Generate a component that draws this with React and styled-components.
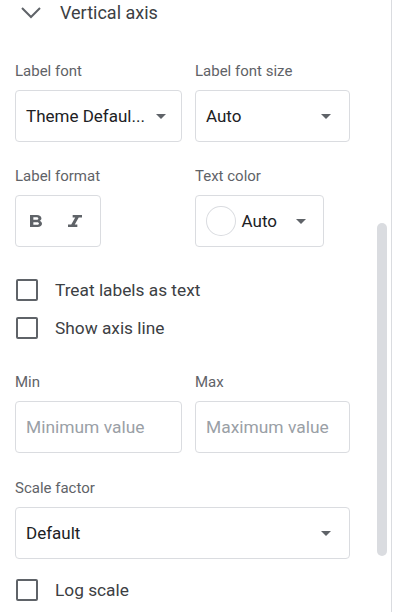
import React from 'react';
import styled, { createGlobalStyle } from 'styled-components';

const GlobalStyle = createGlobalStyle`
    html, body {
        margin: 0;
        padding: 0;
        background: #fff;
    }
    body {
        font-family: Roboto, 'Liberation Sans', Arial, sans-serif;
    }
`;

const Panel = styled.div`
    position: relative;
    width: 391px;
    height: 612px;
    border-right: 1px solid #dadce0;
    overflow: hidden;
`;

const Header = styled.div`
    display: flex;
    align-items: center;
    gap: 19px;
    height: 26px;
    padding-left: 21px;
    color: #3c4043;
    font-size: 18px;
    line-height: 26px;
`;

const Body = styled.div`
    width: 335px;
    padding: 35px 15px 0 15px;
`;

const Columns = styled.div`
    display: grid;
    grid-template-columns: 167px 155px;
    column-gap: 13px;
    margin-top: ${props => props.top || 0}px;
`;

const Field = styled.div`
    display: flex;
    flex-direction: column;
    align-items: flex-start;
    margin-top: ${props => props.top || 0}px;
`;

const Label = styled.div`
    color: #5f6368;
    font-size: 15px;
    line-height: 20px;
    margin-bottom: 9px;
`;

const Box = styled.div`
    box-sizing: border-box;
    display: flex;
    align-items: center;
    height: 52px;
    width: ${props => (props.w ? `${props.w}px` : '100%')};
    border: 1px solid #dadce0;
    border-radius: 4px;
    background: #fff;
`;

const Select = styled(Box)`
    justify-content: space-between;
    padding: 0 ${props => props.pr || 17}px 0 10px;
`;

const Value = styled.span`
    color: #202124;
    font-size: 17px;
    white-space: nowrap;
`;

const Placeholder = styled.span`
    color: #9aa0a6;
    font-size: 17.4px;
    padding-left: 10px;
    white-space: nowrap;
`;

const Arrow = styled.span`
    width: 0;
    height: 0;
    border-left: 5px solid transparent;
    border-right: 5px solid transparent;
    border-top: 5px solid #5f6368;
`;

const FormatBox = styled(Box)`
    padding-left: 14px;
    gap: 26px;
`;

const ColorBox = styled(Box)`
    padding: 0 17px 0 10px;
`;

const Swatch = styled.span`
    box-sizing: border-box;
    width: 30px;
    height: 30px;
    border-radius: 50%;
    border: 1px solid #dadce0;
    margin-right: 6px;
`;

const ColorValue = styled(Value)`
    margin-right: 19px;
`;

const CheckRow = styled.label`
    display: flex;
    align-items: center;
    gap: 17px;
    height: 36px;
    padding-left: 1px;
    margin-top: ${props => props.top || 0}px;
    color: #3c4043;
    font-size: 17.3px;
`;

const Check = styled.span`
    box-sizing: border-box;
    width: 22px;
    height: 22px;
    border: 2px solid #5f6368;
    border-radius: 2px;
`;

const Thumb = styled.div`
    position: absolute;
    left: 377px;
    top: 223px;
    width: 10px;
    height: 333px;
    border-radius: 5px;
    background: #dadce0;
`;

const Chevron = () => (
    <svg width="20" height="12" viewBox="0 0 20 12">
        <polyline points="1,1 10,10 19,1" fill="none" stroke="#5f6368" strokeWidth="2" />
    </svg>
);

const BoldIcon = () => (
    <svg width="12" height="12" viewBox="7 4 10.75 14" preserveAspectRatio="none">
        <path
            fill="#5f6368"
            d="M15.6 10.79c.97-.67 1.65-1.77 1.65-2.79 0-2.26-1.75-4-4-4H7v14h7.04c2.09 0 3.71-1.7 3.71-3.79 0-1.52-.86-2.82-2.15-3.42zM10 6.5h3c.83 0 1.5.67 1.5 1.5s-.67 1.5-1.5 1.5h-3v-3zm3.5 9H10v-3h3.5c.83 0 1.5.67 1.5 1.5s-.67 1.5-1.5 1.5z"
        />
    </svg>
);

const ItalicIcon = () => (
    <svg width="14" height="12" viewBox="6 4 12 14" preserveAspectRatio="none">
        <path fill="#5f6368" d="M10 4v3h2.21l-3.42 8H6v3h8v-3h-2.21l3.42-8H18V4z" />
    </svg>
);

const Checkbox = ({ text, top }) => (
    <CheckRow top={top}>
        <Check />
        {text}
    </CheckRow>
);

export default function App() {
    return (
        <>
            <GlobalStyle />
            <Panel>
                <Header>
                    <Chevron />
                    Vertical axis
                </Header>
                <Body>
                    <Columns>
                        <Field>
                            <Label>Label font</Label>
                            <Select pr={15}>
                                <Value>Theme Defaul...</Value>
                                <Arrow />
                            </Select>
                        </Field>
                        <Field>
                            <Label>Label font size</Label>
                            <Select pr={18}>
                                <Value>Auto</Value>
                                <Arrow />
                            </Select>
                        </Field>
                    </Columns>
                    <Columns top={24}>
                        <Field>
                            <Label>Label format</Label>
                            <FormatBox w={86}>
                                <BoldIcon />
                                <ItalicIcon />
                            </FormatBox>
                        </Field>
                        <Field>
                            <Label>Text color</Label>
                            <ColorBox w={129}>
                                <Swatch />
                                <ColorValue>Auto</ColorValue>
                                <Arrow />
                            </ColorBox>
                        </Field>
                    </Columns>
                    <Checkbox top={25} text="Treat labels as text" />
                    <Checkbox top={2} text="Show axis line" />
                    <Columns top={26}>
                        <Field>
                            <Label>Min</Label>
                            <Box>
                                <Placeholder>Minimum value</Placeholder>
                            </Box>
                        </Field>
                        <Field>
                            <Label>Max</Label>
                            <Box>
                                <Placeholder>Maximum value</Placeholder>
                            </Box>
                        </Field>
                    </Columns>
                    <Field top={25}>
                        <Label>Scale factor</Label>
                        <Select pr={18}>
                            <Value>Default</Value>
                            <Arrow />
                        </Select>
                    </Field>
                    <Checkbox top={13} text="Log scale" />
                </Body>
                <Thumb />
            </Panel>
        </>
    );
}
